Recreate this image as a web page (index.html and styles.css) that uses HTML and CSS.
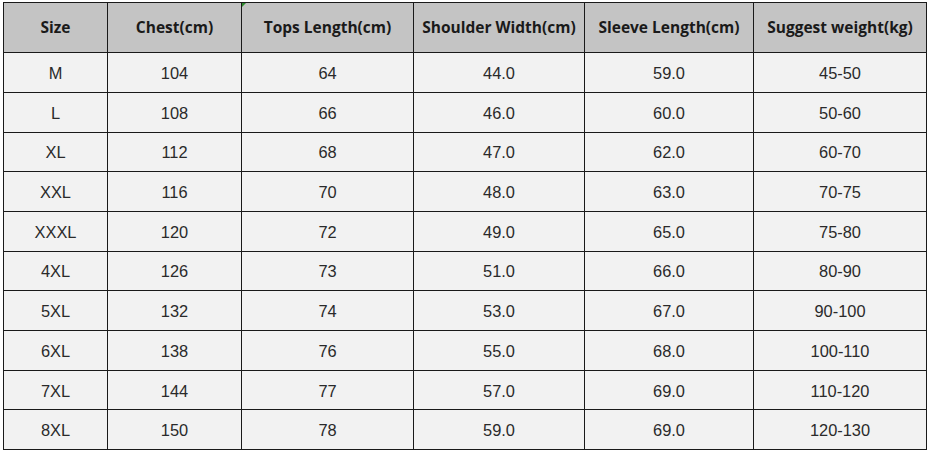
FILE: index.html
```html
<!DOCTYPE html>
<html>
<head>
<meta charset="utf-8">
<link rel="stylesheet" href="styles.css">
</head>
<body>
<div class="wrap">
<table class="size-table">
<colgroup>
<col class="c1"><col class="c2"><col class="c3"><col class="c4"><col class="c5"><col class="c6">
</colgroup>
<thead>
<tr><th>Size</th><th>Chest(cm)</th><th class="mark">Tops Length(cm)</th><th>Shoulder Width(cm)</th><th>Sleeve Length(cm)</th><th>Suggest weight(kg)</th></tr>
</thead>
<tbody>
<tr><td>M</td><td>104</td><td>64</td><td>44.0</td><td>59.0</td><td>45-50</td></tr>
<tr><td>L</td><td>108</td><td>66</td><td>46.0</td><td>60.0</td><td>50-60</td></tr>
<tr><td>XL</td><td>112</td><td>68</td><td>47.0</td><td>62.0</td><td>60-70</td></tr>
<tr><td>XXL</td><td>116</td><td>70</td><td>48.0</td><td>63.0</td><td>70-75</td></tr>
<tr><td>XXXL</td><td>120</td><td>72</td><td>49.0</td><td>65.0</td><td>75-80</td></tr>
<tr><td>4XL</td><td>126</td><td>73</td><td>51.0</td><td>66.0</td><td>80-90</td></tr>
<tr><td>5XL</td><td>132</td><td>74</td><td>53.0</td><td>67.0</td><td>90-100</td></tr>
<tr><td>6XL</td><td>138</td><td>76</td><td>55.0</td><td>68.0</td><td>100-110</td></tr>
<tr><td>7XL</td><td>144</td><td>77</td><td>57.0</td><td>69.0</td><td>110-120</td></tr>
<tr><td>8XL</td><td>150</td><td>78</td><td>59.0</td><td>69.0</td><td>120-130</td></tr>
</tbody>
</table>
</div>
</body>
</html>
```
FILE: styles.css
```css
html, body {
  margin: 0;
  padding: 0;
  background: #ffffff;
}
.wrap {
  padding: 2px 0 0 3px;
}
.size-table {
  border-collapse: collapse;
  table-layout: fixed;
  width: 923px;
  font-family: "Liberation Sans", Arial, sans-serif;
  color: #2a2a2a;
}
.c1 { width: 104px; }
.c2 { width: 134px; }
.c3 { width: 172px; }
.c4 { width: 171px; }
.c5 { width: 169px; }
.c6 { width: 173px; }
.size-table th,
.size-table td {
  border: 1.5px solid #1a1a1a;
  text-align: center;
  padding: 0;
  white-space: nowrap;
  overflow: hidden;
}
.size-table th {
  height: 48.2px;
  background: #c4c4c4;
  font-family: "Open Sans", "Noto Sans", sans-serif;
  font-weight: 700;
  font-size: 15.5px;
  color: #1a1a1a;
  padding-bottom: 1px;
}
.size-table td {
  height: 36.7px;
  background: #f2f2f2;
  font-size: 16.4px;
  padding-top: 2px;
}
.mark {
  position: relative;
}
.mark::before {
  content: "";
  position: absolute;
  left: 0;
  top: 0;
  width: 0;
  height: 0;
  border-top: 4px solid #2e8b2e;
  border-right: 4px solid transparent;
}
```
